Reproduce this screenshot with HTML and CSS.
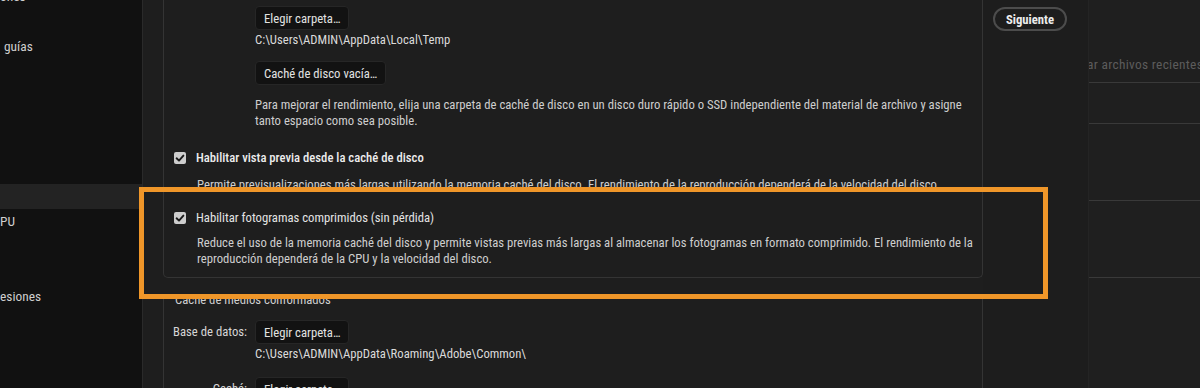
FILE: index.html
```html
<!DOCTYPE html>
<html lang="es">
<head>
<meta charset="utf-8">
<title>Preferencias - Caché de medios</title>
<link rel="stylesheet" href="styles.css">
</head>
<body>
<aside class="sidebar">
  <ul class="nav">
    <li class="nav-item">ones</li>
    <li class="nav-item"></li>
    <li class="nav-item nav-indent">guías</li>
    <li class="nav-item"></li>
    <li class="nav-item"></li>
    <li class="nav-item"></li>
    <li class="nav-item"></li>
    <li class="nav-item"></li>
    <li class="nav-item nav-selected"></li>
    <li class="nav-item">PU</li>
    <li class="nav-item"></li>
    <li class="nav-item"></li>
    <li class="nav-item">esiones</li>
    <li class="nav-item"></li>
  </ul>
</aside>

<main class="main">
  <section class="group group-open-top">
    <div class="field">
      <div class="field-label"></div>
      <div class="field-body">
        <button class="btn">Elegir carpeta…</button>
        <div class="path">C:\Users\ADMIN\AppData\Local\Temp</div>
        <button class="btn btn-spaced">Caché de disco vacía…</button>
        <p class="note">Para mejorar el rendimiento, elija una carpeta de caché de disco en un disco duro rápido o SSD independiente del material de archivo y asigne tanto espacio como sea posible.</p>
      </div>
    </div>

    <label class="check check-first">
      <span class="box"><svg viewBox="0 0 12 12" width="12" height="12"><path d="M2.6 6.3 L5 8.6 L9.4 3.6" fill="none" stroke="#1a1a1a" stroke-width="1.9" stroke-linecap="round" stroke-linejoin="round"/></svg></span>
      <span class="check-text strong">Habilitar vista previa desde la caché de disco</span>
    </label>
    <p class="desc desc-first">Permite previsualizaciones más largas utilizando la memoria caché del disco. El rendimiento de la reproducción dependerá de la velocidad del disco.</p>

    <label class="check check-second">
      <span class="box"><svg viewBox="0 0 12 12" width="12" height="12"><path d="M2.6 6.3 L5 8.6 L9.4 3.6" fill="none" stroke="#1a1a1a" stroke-width="1.9" stroke-linecap="round" stroke-linejoin="round"/></svg></span>
      <span class="check-text">Habilitar fotogramas comprimidos (sin pérdida)</span>
    </label>
    <p class="desc desc-second">Reduce el uso de la memoria caché del disco y permite vistas previas más largas al almacenar los fotogramas en formato comprimido. El rendimiento de la reproducción dependerá de la CPU y la velocidad del disco.</p>
  </section>

  <section class="group group-second">
    <h3 class="group-title">Caché de medios conformados</h3>
    <div class="field field-db">
      <div class="field-label">Base de datos:</div>
      <div class="field-body">
        <button class="btn">Elegir carpeta…</button>
        <div class="path">C:\Users\ADMIN\AppData\Roaming\Adobe\Common\</div>
      </div>
    </div>
    <div class="field field-cache">
      <div class="field-label">Caché:</div>
      <div class="field-body">
        <button class="btn">Elegir carpeta…</button>
      </div>
    </div>
  </section>
</main>

<div class="actions">
  <button class="pill">Siguiente</button>
</div>

<div class="recent">
  <div class="recent-row recent-head"><span class="recent-text">ar archivos recientes</span></div>
  <div class="recent-row recent-r2"></div>
  <div class="recent-row recent-r3"></div>
  <div class="recent-row recent-r4"></div>
</div>

<div class="highlight"></div>
</body>
</html>
```
FILE: styles.css
```css
* { box-sizing: border-box; }

html, body {
  margin: 0;
  width: 1200px;
  height: 388px;
  overflow: hidden;
}

body {
  position: relative;
  display: flex;
  background: #1e1e1e;
  color: #d2d2d2;
  font-family: "Roboto Condensed", "Liberation Sans Narrow", "Liberation Sans", sans-serif;
  font-size: 12.7px;
}

/* ---------- sidebar ---------- */
.sidebar {
  flex: none;
  width: 143px;
  background: #111111;
  border-right: 1px solid #2a2a2a;
  overflow: hidden;
}
.nav {
  list-style: none;
  margin: -16px 0 0;
  padding: 0;
}
.nav-item {
  height: 25px;
  line-height: 25px;
  font-size: 13.4px;
  color: #cfcfcf;
  white-space: nowrap;
}
.nav-indent { padding-left: 4px; }
.nav-selected { background: #232323; }

/* ---------- main panel ---------- */
.main {
  flex: none;
  width: 840px;
  padding-left: 20px;
}

.group {
  border: 1px solid #343434;
}
.group-open-top {
  border-top: none;
  border-radius: 0 0 5px 5px;
  height: 278px;
  padding-top: 6px;
}
.group-second {
  margin-top: 16px;
  border-bottom: none;
  border-radius: 5px 5px 0 0;
  height: 200px;
  padding-top: 0;
}

.field {
  display: flex;
}
.field-label {
  flex: none;
  width: 91px;
  padding-right: 8px;
  text-align: right;
  line-height: 24px;
  color: #d6d6d6;
}
.field-body {
  flex: 1;
  min-width: 0;
  padding-right: 12px;
}

.btn {
  display: block;
  height: 24px;
  margin: 0;
  padding: 0 8px;
  font: inherit;
  color: #e2e2e2;
  background: #121212;
  border: 1px solid #262626;
  border-radius: 4px;
}
.btn-spaced { margin-top: 13px; }

.path {
  margin-top: 2px;
  line-height: 16px;
  color: #dadada;
}

.note {
  margin: 12px 0 0;
  line-height: 16px;
  color: #cecece;
}

.check {
  display: flex;
  align-items: center;
  gap: 10px;
  height: 16px;
  padding-left: 10px;
}
.check-first { margin-top: 21px; }
.check-second { margin-top: 17px; }

.box {
  flex: none;
  width: 12px;
  height: 12px;
  border-radius: 2px;
  background: #cdcdcd;
  display: flex;
}
.check-text {
  color: #e4e4e4;
  line-height: 16px;
}
.strong { font-weight: 500; color: #ededed; }

.desc {
  margin: 0;
  padding: 0 3px 0 33px;
  line-height: 16px;
  color: #cecece;
}
.desc-first { margin-top: 11px; }
.desc-second { margin-top: 9px; }

.group-title {
  margin: -3px 0 0;
  padding-left: 11px;
  font-size: 12.7px;
  font-weight: 400;
  line-height: 16px;
  color: #cfcfcf;
}
.field-db { margin-top: 12px; }
.field-cache { margin-top: 15px; }

/* ---------- action column ---------- */
.actions {
  flex: none;
  width: 106px;
  padding: 7px 0 0 10px;
  border-right: 1px solid #242424;
  background: #1d1d1d;
}
.pill {
  width: 74px;
  height: 24px;
  margin: 0;
  padding: 0;
  font: inherit;
  font-weight: 700;
  color: #ececec;
  background: #1d1d1d;
  border: 2px solid #4c4c4c;
  border-radius: 13px;
}

/* ---------- recent files column ---------- */
.recent {
  flex: 1;
  background: #1f1f1f;
  overflow: hidden;
}
.recent-row {
  border-bottom: 1px solid #393939;
}
.recent-head {
  height: 83px;
  padding-top: 56px;
}
.recent-r2 { height: 41px; }
.recent-r3 { height: 77px; }
.recent-r4 { height: 77px; }
.recent-text {
  display: block;
  margin-left: -2px;
  white-space: nowrap;
  font-size: 13.4px;
  line-height: 18px;
  letter-spacing: 0.3px;
  color: #5c5c5c;
}

/* ---------- overlay highlight ---------- */
.highlight {
  position: absolute;
  left: 139px;
  top: 187px;
  width: 909px;
  height: 112px;
  border: 5px solid #ef9629;
  pointer-events: none;
}
```
